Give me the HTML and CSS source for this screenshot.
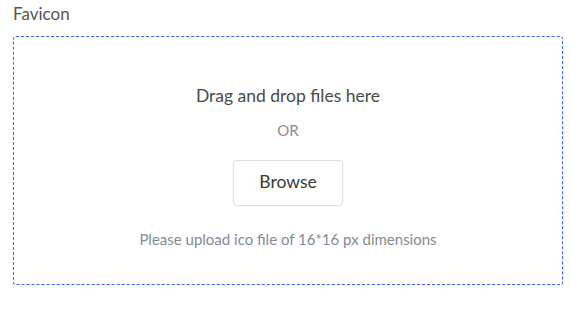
FILE: index.html
```html
<!DOCTYPE html>
<html>
<head>
<meta charset="utf-8">
<link rel="stylesheet" href="styles.css">
</head>
<body>
<div class="field">
  <div class="label">Favicon</div>
  <div class="dropzone">
    <div class="title">Drag and drop files here</div>
    <div class="or">OR</div>
    <button class="browse">Browse</button>
    <div class="hint">Please upload ico file of 16*16 px dimensions</div>
  </div>
</div>
</body>
</html>
```
FILE: styles.css
```css
html, body {
  margin: 0;
  padding: 0;
  background: #fff;
}
body {
  font-family: Lato, "Open Sans", sans-serif;
}
.field {
  padding: 3px 8px 0 13px;
}
.label {
  font-size: 17px;
  line-height: 22px;
  color: #555;
  margin-bottom: 11px;
}
.dropzone {
  box-sizing: border-box;
  width: 550px;
  height: 249px;
  border: 1px dashed #3366ff;
  border-radius: 3px;
  display: flex;
  flex-direction: column;
  align-items: center;
  padding-top: 48px;
}
.title {
  font-size: 17.5px;
  line-height: 22px;
  color: #4a4a4a;
}
.or {
  margin-top: 14px;
  font-size: 15px;
  line-height: 18px;
  color: #8a8d96;
}
.browse {
  margin-top: 21px;
  width: 110px;
  height: 46px;
  padding: 0 0 4px;
  background: #fff;
  border: 1px solid #ddd;
  border-radius: 4px;
  font-family: Lato, sans-serif;
  font-size: 17.5px;
  color: #3a3a3a;
}
.hint {
  margin-top: 24px;
  font-size: 15px;
  line-height: 18px;
  color: #858a96;
}
```
